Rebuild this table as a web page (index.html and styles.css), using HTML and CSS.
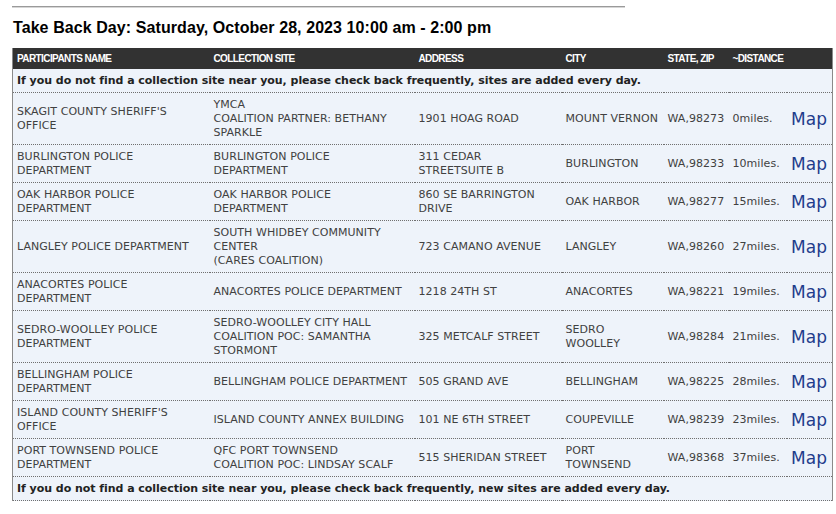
FILE: index.html
```html
<!DOCTYPE html>
<html>
<head>
<meta charset="utf-8">
<link rel="stylesheet" href="styles.css">
</head>
<body>
<div class="page">
  <hr class="rule">
  <h2 class="title">Take Back Day: Saturday, October 28, 2023 10:00 am - 2:00 pm</h2>
  <table class="sites">
    <colgroup>
      <col class="c-name"><col class="c-site"><col class="c-addr"><col class="c-city"><col class="c-zip"><col class="c-dist"><col class="c-map">
    </colgroup>
    <thead>
      <tr>
        <th>PARTICIPANTS NAME</th>
        <th>COLLECTION SITE</th>
        <th>ADDRESS</th>
        <th>CITY</th>
        <th>STATE, ZIP</th>
        <th>~DISTANCE</th>
        <th></th>
      </tr>
    </thead>
    <tbody>
      <tr class="notice"><td colspan="7">If you do not find a collection site near you, please check back frequently, sites are added every day.</td></tr>
      <tr>
        <td>SKAGIT COUNTY SHERIFF'S<br>OFFICE</td>
        <td>YMCA<br>COALITION PARTNER: BETHANY<br>SPARKLE</td>
        <td>1901 HOAG ROAD</td>
        <td>MOUNT VERNON</td>
        <td>WA,98273</td>
        <td>0miles.</td>
        <td class="map"><a href="#">Map</a></td>
      </tr>
      <tr>
        <td>BURLINGTON POLICE<br>DEPARTMENT</td>
        <td>BURLINGTON POLICE<br>DEPARTMENT</td>
        <td>311 CEDAR<br>STREETSUITE B</td>
        <td>BURLINGTON</td>
        <td>WA,98233</td>
        <td>10miles.</td>
        <td class="map"><a href="#">Map</a></td>
      </tr>
      <tr>
        <td>OAK HARBOR POLICE<br>DEPARTMENT</td>
        <td>OAK HARBOR POLICE<br>DEPARTMENT</td>
        <td>860 SE BARRINGTON<br>DRIVE</td>
        <td>OAK HARBOR</td>
        <td>WA,98277</td>
        <td>15miles.</td>
        <td class="map"><a href="#">Map</a></td>
      </tr>
      <tr>
        <td>LANGLEY POLICE DEPARTMENT</td>
        <td>SOUTH WHIDBEY COMMUNITY<br>CENTER<br>(CARES COALITION)</td>
        <td>723 CAMANO AVENUE</td>
        <td>LANGLEY</td>
        <td>WA,98260</td>
        <td>27miles.</td>
        <td class="map"><a href="#">Map</a></td>
      </tr>
      <tr>
        <td>ANACORTES POLICE<br>DEPARTMENT</td>
        <td>ANACORTES POLICE DEPARTMENT</td>
        <td>1218 24TH ST</td>
        <td>ANACORTES</td>
        <td>WA,98221</td>
        <td>19miles.</td>
        <td class="map"><a href="#">Map</a></td>
      </tr>
      <tr>
        <td>SEDRO-WOOLLEY POLICE<br>DEPARTMENT</td>
        <td>SEDRO-WOOLLEY CITY HALL<br>COALITION POC: SAMANTHA<br>STORMONT</td>
        <td>325 METCALF STREET</td>
        <td>SEDRO<br>WOOLLEY</td>
        <td>WA,98284</td>
        <td>21miles.</td>
        <td class="map"><a href="#">Map</a></td>
      </tr>
      <tr>
        <td>BELLINGHAM POLICE<br>DEPARTMENT</td>
        <td>BELLINGHAM POLICE DEPARTMENT</td>
        <td>505 GRAND AVE</td>
        <td>BELLINGHAM</td>
        <td>WA,98225</td>
        <td>28miles.</td>
        <td class="map"><a href="#">Map</a></td>
      </tr>
      <tr>
        <td>ISLAND COUNTY SHERIFF'S<br>OFFICE</td>
        <td>ISLAND COUNTY ANNEX BUILDING</td>
        <td>101 NE 6TH STREET</td>
        <td>COUPEVILLE</td>
        <td>WA,98239</td>
        <td>23miles.</td>
        <td class="map"><a href="#">Map</a></td>
      </tr>
      <tr>
        <td>PORT TOWNSEND POLICE<br>DEPARTMENT</td>
        <td>QFC PORT TOWNSEND<br>COALITION POC: LINDSAY SCALF</td>
        <td>515 SHERIDAN STREET</td>
        <td>PORT<br>TOWNSEND</td>
        <td>WA,98368</td>
        <td>37miles.</td>
        <td class="map"><a href="#">Map</a></td>
      </tr>
      <tr class="notice"><td colspan="7">If you do not find a collection site near you, please check back frequently, new sites are added every day.</td></tr>
    </tbody>
  </table>
</div>
</body>
</html>
```

FILE: styles.css
```css
html, body {
  margin: 0;
  padding: 0;
  background: #ffffff;
}

.page {
  padding: 6px 4px 0 12px;
}

.rule {
  width: 613px;
  margin: 0;
  border: 0;
  border-top: 1px solid #9a9a9a;
  border-bottom: 1px solid #d6d6d6;
  height: 0;
}

.title {
  font-family: "Liberation Sans", Arial, sans-serif;
  font-size: 16px;
  font-weight: bold;
  line-height: 20px;
  letter-spacing: 0.08px;
  color: #000;
  margin: 10px 0 10px 1px;
}

.sites {
  width: 820px;
  table-layout: fixed;
  border-collapse: collapse;
  border-left: 1px solid #8a8a8a;
  border-right: 1px solid #8a8a8a;
  font-family: "DejaVu Sans", Verdana, sans-serif;
  font-size: 11px;
  color: #414141;
  background: #eef3fa;
}

.c-name { width: 197px; }
.c-site { width: 205px; }
.c-addr { width: 147px; }
.c-city { width: 102px; }
.c-zip { width: 65px; }
.c-dist { width: 58px; }
.c-map { width: 46px; }

.sites th {
  background: #323232;
  color: #ffffff;
  font-family: "Liberation Sans", Arial, sans-serif;
  font-size: 10px;
  font-weight: bold;
  letter-spacing: -0.6px;
  text-align: left;
  line-height: 13px;
  padding: 4px 5px 4px 4px;
  white-space: nowrap;
}

.sites td {
  padding: 5px 5px 4px 4px;
  line-height: 14px;
  vertical-align: middle;
  border-bottom: 1px dotted #6f6f6f;
  letter-spacing: 0.05px;
  white-space: nowrap;
}

.sites .notice td {
  font-weight: bold;
  color: #222;
  font-size: 11px;
  letter-spacing: -0.04px;
}

.sites td.map {
  padding: 3px 5px 3px 4px;
  text-align: right;
}

.map a {
  font-size: 17px;
  line-height: 20px;
  color: #1f3c8c;
  text-decoration: none;
  letter-spacing: 0;
}
```
